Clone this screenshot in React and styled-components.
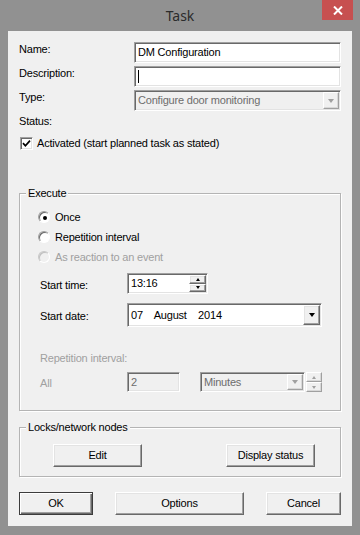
import React from "react";
import styled, { createGlobalStyle, css } from "styled-components";

const Global = createGlobalStyle`
  html, body { margin: 0; padding: 0; background: #919191; }
  body { font-family: "Liberation Sans", Arial, sans-serif; font-size: 11px; }
  * { box-sizing: border-box; }
`;

const sunken = css`
  border: 1px solid;
  border-color: #a0a0a0 #ffffff #ffffff #a0a0a0;
  box-shadow: inset 1px 1px 0 #696969, inset -1px -1px 0 #e3e3e3;
`;

const raised = css`
  border: 1px solid;
  border-color: #ffffff #696969 #696969 #ffffff;
  box-shadow: inset -1px -1px 0 #a0a0a0, inset 1px 1px 0 #e3e3e3;
  background: #f0f0f0;
`;

const Window = styled.div`
  width: 360px;
  height: 535px;
  background: #919191;
  display: flex;
  flex-direction: column;
  padding: 0 8px 9px;
`;

const TitleBar = styled.div`
  height: 31px;
  position: relative;
  display: flex;
  align-items: center;
  justify-content: center;
  font-family: "Noto Sans", "Open Sans", sans-serif;
  font-size: 14px;
  color: #2b2b2b;
  padding-bottom: 1px;
`;

const CloseButton = styled.div`
  position: absolute;
  top: 0;
  left: 314px;
  width: 31px;
  height: 20px;
  background: #c75050;
  display: flex;
  align-items: center;
  justify-content: center;
`;

const Client = styled.div`
  flex: 1;
  background: #f0f0f0;
  padding: 11px;
  display: flex;
  flex-direction: column;
  color: #000;
  letter-spacing: -0.2px;
  line-height: 13px;
`;

const Form = styled.div`
  display: flex;
  flex-direction: column;
  gap: 3px;
`;

const FieldRow = styled.div`
  display: grid;
  grid-template-columns: 115px 1fr;
  height: 21px;
`;

const Label = styled.div`
  padding-top: 1px;
  color: ${(p) => (p.$disabled ? "#a0a0a0" : "#000")};
`;

const RowLabel = styled.span`
  padding-top: 3px;
  color: ${(p) => (p.$disabled ? "#a0a0a0" : "#000")};
`;

const TextBox = styled.div`
  ${sunken};
  height: ${(p) => p.$h || 21}px;
  width: ${(p) => (p.$w ? `${p.$w}px` : "auto")};
  background: ${(p) => (p.$disabled ? "#f0f0f0" : "#ffffff")};
  color: ${(p) => (p.$disabled ? "#6d6d6d" : "#000")};
  display: flex;
  align-items: center;
  padding: 0 0 0 2px;
  position: relative;
`;

const BoxText = styled.span`
  flex: 1;
  white-space: pre;
  padding-left: 1px;
`;

const Caret = styled.span`
  width: 1px;
  height: 13px;
  background: #000;
  margin-left: 1px;
`;

const DropButton = styled.div`
  ${raised};
  width: ${(p) => p.$w || 17}px;
  align-self: stretch;
  margin: 1px 1px 1px 0;
  display: flex;
  align-items: center;
  justify-content: center;
  ${(p) =>
    p.$disabled &&
    css`
      border-color: #ffffff #a0a0a0 #a0a0a0 #ffffff;
      box-shadow: inset -1px -1px 0 #d8d8d8;
    `}
`;

const Tri = styled.span`
  width: 0;
  height: 0;
  border-left: ${(p) => p.$s}px solid transparent;
  border-right: ${(p) => p.$s}px solid transparent;
  ${(p) =>
    p.$up
      ? css`border-bottom: ${Math.ceil(p.$s / 1.5) + 1}px solid ${p.$c || "#000"};`
      : css`border-top: ${Math.ceil(p.$s / 1.5) + 1}px solid ${p.$c || "#000"};`}
`;

const Spinner = styled.div`
  display: flex;
  flex-direction: column;
  width: ${(p) => p.$w || 17}px;
  align-self: stretch;
  ${(p) => p.$inside && css`margin: 1px 1px 1px 0;`}
`;

const SpinHalf = styled.div`
  ${raised};
  flex: 1;
  display: flex;
  align-items: center;
  justify-content: center;
  ${(p) =>
    p.$disabled &&
    css`
      border-color: #ffffff #a0a0a0 #a0a0a0 #ffffff;
      box-shadow: inset -1px -1px 0 #d8d8d8;
    `}
`;

const StatusLabel = styled.div`
  margin-top: 4px;
`;

const CheckRow = styled.div`
  margin-top: 9px;
  height: 13px;
  display: flex;
  align-items: center;
  gap: 4px;
  padding-left: 1px;
`;

const CheckBox = styled.div`
  ${sunken};
  width: 13px;
  height: 13px;
  background: #fff;
  display: flex;
  align-items: center;
  justify-content: center;
`;

const Group = styled.div`
  position: relative;
  margin-top: ${(p) => p.$mt}px;
  border: 1px solid #b4b4b4;
  box-shadow: inset 1px 1px 0 #ffffff, 1px 1px 0 #ffffff;
`;

const GroupTitle = styled.span`
  position: absolute;
  top: -7px;
  left: 6px;
  padding: 0 2px;
  background: #f0f0f0;
  line-height: 13px;
`;

const ExecBody = styled.div`
  padding: 13px 0 18px 18px;
  display: flex;
  flex-direction: column;
`;

const RadioRow = styled.div`
  height: 20px;
  display: flex;
  align-items: center;
  gap: 5px;
  color: ${(p) => (p.$disabled ? "#a0a0a0" : "#000")};
`;

const Radio = styled.span`
  width: 12px;
  height: 12px;
  border-radius: 50%;
  border: 1px solid;
  border-color: ${(p) =>
    p.$disabled ? "#c8c8c8 #fff #fff #c8c8c8" : "#a0a0a0 #fff #fff #a0a0a0"};
  box-shadow: inset 1px 1px 0 ${(p) => (p.$disabled ? "#c0c0c0" : "#696969")};
  background: ${(p) => (p.$disabled ? "#f0f0f0" : "#fff")};
  display: flex;
  align-items: center;
  justify-content: center;
`;

const RadioDot = styled.span`
  width: 4px;
  height: 4px;
  border-radius: 50%;
  background: #000;
  margin: 1px 0 0 1px;
`;

const InputRow = styled.div`
  display: grid;
  grid-template-columns: 87px auto;
  align-items: center;
  padding-left: 2px;
  margin-top: ${(p) => p.$mt}px;
  height: ${(p) => p.$h}px;
`;

const Inline = styled.div`
  display: flex;
  align-items: stretch;
  gap: ${(p) => p.$gap || 0}px;
  margin-left: ${(p) => p.$ml || 0}px;
  height: 20px;
`;

const RepLabel = styled.div`
  margin-top: 25px;
  padding-left: 2px;
  color: #a0a0a0;
`;

const LocksBody = styled.div`
  display: flex;
  justify-content: space-between;
  padding: 16px 25px 9px 33px;
`;

const Button = styled.div`
  ${raised};
  width: ${(p) => p.$w}px;
  height: 23px;
  display: flex;
  align-items: center;
  justify-content: center;
  color: #000;
  ${(p) =>
    p.$default &&
    css`
      border: 1px solid #3c3c3c;
      box-shadow: inset 1px 1px 0 #ffffff, inset -1px -1px 0 #696969,
        inset -2px -2px 0 #a0a0a0;
    `}
`;

const Footer = styled.div`
  margin-top: auto;
  display: flex;
  justify-content: space-between;
`;

export default function App() {
  return (
    <>
      <Global />
      <Window>
        <TitleBar>
          Task
          <CloseButton>
            <svg width="10" height="9" viewBox="0 0 10 9">
              <path d="M1 0.5 L9 8.5 M9 0.5 L1 8.5" stroke="#fff" strokeWidth="2" />
            </svg>
          </CloseButton>
        </TitleBar>
        <Client>
          <Form>
            <FieldRow>
              <Label>Name:</Label>
              <TextBox>
                <BoxText>DM Configuration</BoxText>
              </TextBox>
            </FieldRow>
            <FieldRow>
              <Label>Description:</Label>
              <TextBox>
                <Caret />
              </TextBox>
            </FieldRow>
            <FieldRow>
              <Label>Type:</Label>
              <TextBox $disabled>
                <BoxText>Configure door monitoring</BoxText>
                <DropButton $disabled $w={16}>
                  <Tri $s={3.5} $c="#a0a0a0" />
                </DropButton>
              </TextBox>
            </FieldRow>
          </Form>
          <StatusLabel>Status:</StatusLabel>
          <CheckRow>
            <CheckBox>
              <svg width="9" height="9" viewBox="0 0 9 9">
                <path d="M1 4.2 L3.4 6.8 L8 1.6" stroke="#000" strokeWidth="1.7" fill="none" />
              </svg>
            </CheckBox>
            Activated (start planned task as stated)
          </CheckRow>

          <Group $mt={43}>
            <GroupTitle>Execute</GroupTitle>
            <ExecBody>
              <RadioRow>
                <Radio>
                  <RadioDot />
                </Radio>
                Once
              </RadioRow>
              <RadioRow>
                <Radio />
                Repetition interval
              </RadioRow>
              <RadioRow $disabled>
                <Radio $disabled />
                As reaction to an event
              </RadioRow>
              <InputRow $mt={6} $h={21}>
                <RowLabel>Start time:</RowLabel>
                <TextBox $w={81}>
                  <BoxText>13:16</BoxText>
                  <Spinner $inside $w={17}>
                    <SpinHalf>
                      <Tri $up $s={2} />
                    </SpinHalf>
                    <SpinHalf>
                      <Tri $s={2} />
                    </SpinHalf>
                  </Spinner>
                </TextBox>
              </InputRow>
              <InputRow $mt={9} $h={24}>
                <RowLabel>Start date:</RowLabel>
                <TextBox $w={195} $h={24}>
                  <BoxText>07    August    2014</BoxText>
                  <DropButton $w={17}>
                    <Tri $s={3.5} />
                  </DropButton>
                </TextBox>
              </InputRow>
              <RepLabel>Repetition interval:</RepLabel>
              <InputRow $mt={7} $h={20}>
                <RowLabel $disabled>All</RowLabel>
                <Inline>
                  <TextBox $w={53} $h={20} $disabled>
                    <BoxText>2</BoxText>
                  </TextBox>
                  <Inline $gap={1} $ml={20}>
                    <TextBox $w={105} $h={20} $disabled>
                      <BoxText>Minutes</BoxText>
                      <DropButton $disabled $w={16}>
                        <Tri $s={3.5} $c="#a0a0a0" />
                      </DropButton>
                    </TextBox>
                    <Spinner $w={16}>
                      <SpinHalf $disabled>
                        <Tri $up $s={2} $c="#a0a0a0" />
                      </SpinHalf>
                      <SpinHalf $disabled>
                        <Tri $s={2} $c="#a0a0a0" />
                      </SpinHalf>
                    </Spinner>
                  </Inline>
                </Inline>
              </InputRow>
            </ExecBody>
          </Group>

          <Group $mt={16}>
            <GroupTitle>Locks/network nodes</GroupTitle>
            <LocksBody>
              <Button $w={89}>Edit</Button>
              <Button $w={89}>Display status</Button>
            </LocksBody>
          </Group>

          <Footer>
            <Button $w={74} $default>
              OK
            </Button>
            <Button $w={129}>Options</Button>
            <Button $w={75}>Cancel</Button>
          </Footer>
        </Client>
      </Window>
    </>
  );
}
